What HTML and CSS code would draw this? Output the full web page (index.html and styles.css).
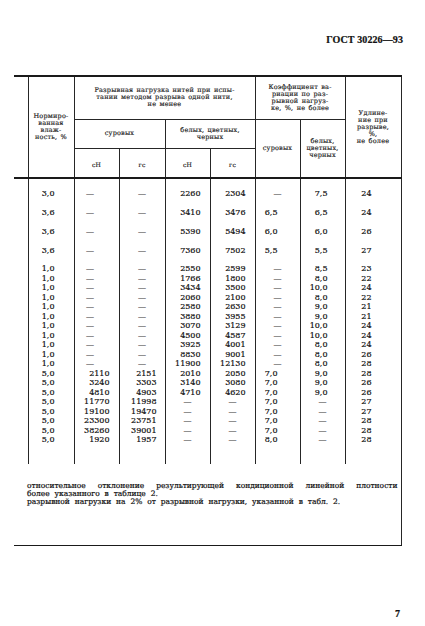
FILE: index.html
```html
<!DOCTYPE html>
<html lang="ru">
<head>
<meta charset="utf-8">
<title>ГОСТ 30226—93</title>
<link rel="stylesheet" href="styles.css">
</head>
<body>
<div class="page">
  <div class="gost">ГОСТ 30226—93</div>
  <table class="tbl">
    <colgroup>
      <col class="c0"><col class="c1"><col class="c2"><col class="c3"><col class="c4"><col class="c5"><col class="c6"><col class="c7"><col class="c8">
    </colgroup>
    <thead>
      <tr class="h1">
        <th class="edge" rowspan="3"></th>
        <th rowspan="3">Нормиро-<br>ванная<br>влаж-<br>ность, %</th>
        <th colspan="4">Разрывная нагрузка нитей при испы-<br>тании методом разрыва одной нити,<br>не менее</th>
        <th colspan="2">Коэффициент ва-<br>риации по раз-<br>рывной нагруз-<br>ке, %, не более</th>
        <th rowspan="3">Удлине-<br>ние при<br>разрыве,<br>%,<br>не более</th>
      </tr>
      <tr class="h2">
        <th colspan="2">суровых</th>
        <th colspan="2">белых, цветных,<br>черных</th>
        <th rowspan="2">суровых</th>
        <th rowspan="2">белых,<br>цветных,<br>черных</th>
      </tr>
      <tr class="h3">
        <th class="unit">сН</th>
        <th class="unit">гс</th>
        <th class="unit">сН</th>
        <th class="unit">гс</th>
      </tr>
    </thead>
    <tbody>
      <tr class="sp sp1"><td></td><td></td><td></td><td></td><td></td><td></td><td></td><td></td><td></td></tr>
      <tr class="big"><td></td><td>3,0</td><td class="d">—</td><td class="d">—</td><td>2260</td><td>2304</td><td class="d">—</td><td>7,5</td><td>24</td></tr>
      <tr class="big"><td></td><td>3,6</td><td class="d">—</td><td class="d">—</td><td>3410</td><td>3476</td><td>6,5</td><td>6,5</td><td>24</td></tr>
      <tr class="big"><td></td><td>3,6</td><td class="d">—</td><td class="d">—</td><td>5390</td><td>5494</td><td>6,0</td><td>6,0</td><td>26</td></tr>
      <tr class="big"><td></td><td>3,6</td><td class="d">—</td><td class="d">—</td><td>7360</td><td>7502</td><td>5,5</td><td>5,5</td><td>27</td></tr>
      <tr class="sp sp2"><td></td><td></td><td></td><td></td><td></td><td></td><td></td><td></td><td></td></tr>
      <tr class="sm"><td></td><td>1,0</td><td class="d">—</td><td class="d">—</td><td>2550</td><td>2599</td><td class="d">—</td><td>8,5</td><td>23</td></tr>
      <tr class="sm"><td></td><td>1,0</td><td class="d">—</td><td class="d">—</td><td>1766</td><td>1800</td><td class="d">—</td><td>8,0</td><td>22</td></tr>
      <tr class="sm"><td></td><td>1,0</td><td class="d">—</td><td class="d">—</td><td>3434</td><td>3500</td><td class="d">—</td><td>10,0</td><td>24</td></tr>
      <tr class="sm"><td></td><td>1,0</td><td class="d">—</td><td class="d">—</td><td>2060</td><td>2100</td><td class="d">—</td><td>8,0</td><td>22</td></tr>
      <tr class="sm"><td></td><td>1,0</td><td class="d">—</td><td class="d">—</td><td>2580</td><td>2630</td><td class="d">—</td><td>9,0</td><td>21</td></tr>
      <tr class="sm"><td></td><td>1,0</td><td class="d">—</td><td class="d">—</td><td>3880</td><td>3955</td><td class="d">—</td><td>9,0</td><td>21</td></tr>
      <tr class="sm"><td></td><td>1,0</td><td class="d">—</td><td class="d">—</td><td>3070</td><td>3129</td><td class="d">—</td><td>10,0</td><td>24</td></tr>
      <tr class="sm"><td></td><td>1,0</td><td class="d">—</td><td class="d">—</td><td>4500</td><td>4587</td><td class="d">—</td><td>10,0</td><td>24</td></tr>
      <tr class="sm"><td></td><td>1,0</td><td class="d">—</td><td class="d">—</td><td>3925</td><td>4001</td><td class="d">—</td><td>8,0</td><td>24</td></tr>
      <tr class="sm"><td></td><td>1,0</td><td class="d">—</td><td class="d">—</td><td>8830</td><td>9001</td><td class="d">—</td><td>8,0</td><td>26</td></tr>
      <tr class="sm"><td></td><td>1,0</td><td class="d">—</td><td class="d">—</td><td>11900</td><td>12130</td><td class="d">—</td><td>8,0</td><td>28</td></tr>
      <tr class="sm"><td></td><td>5,0</td><td>2110</td><td>2151</td><td>2010</td><td>2050</td><td>7,0</td><td>9,0</td><td>28</td></tr>
      <tr class="sm"><td></td><td>5,0</td><td>3240</td><td>3303</td><td>3140</td><td>3080</td><td>7,0</td><td>9,0</td><td>26</td></tr>
      <tr class="sm"><td></td><td>5,0</td><td>4810</td><td>4903</td><td>4710</td><td>4620</td><td>7,0</td><td>9,0</td><td>26</td></tr>
      <tr class="sm"><td></td><td>5,0</td><td>11770</td><td>11998</td><td class="d">—</td><td class="d">—</td><td>7,0</td><td class="d">—</td><td>27</td></tr>
      <tr class="sm"><td></td><td>5,0</td><td>19100</td><td>19470</td><td class="d">—</td><td class="d">—</td><td>7,0</td><td class="d">—</td><td>27</td></tr>
      <tr class="sm"><td></td><td>5,0</td><td>23300</td><td>23751</td><td class="d">—</td><td class="d">—</td><td>7,0</td><td class="d">—</td><td>28</td></tr>
      <tr class="sm"><td></td><td>5,0</td><td>38260</td><td>39001</td><td class="d">—</td><td class="d">—</td><td>7,0</td><td class="d">—</td><td>28</td></tr>
      <tr class="sm"><td></td><td>5,0</td><td>1920</td><td>1957</td><td class="d">—</td><td class="d">—</td><td>8,0</td><td class="d">—</td><td>28</td></tr>
      <tr class="sp sp3"><td></td><td></td><td></td><td></td><td></td><td></td><td></td><td></td><td></td></tr>
    </tbody>
    <tfoot>
      <tr>
        <td class="notes" colspan="9">
          <p class="note just">относительное отклонение результирующей кондиционной линейной плотности</p>
          <p class="note">более указанного в таблице 2.</p>
          <p class="note">разрывной нагрузки на 2% от разрывной нагрузки, указанной в табл. 2.</p>
        </td>
      </tr>
    </tfoot>
  </table>
  <div class="pageno">7</div>
</div>
</body>
</html>
```

FILE: styles.css
```css
html, body {
  margin: 0;
  padding: 0;
  background: #ffffff;
}

body {
  color: #1c1c1c;
  font-family: "DejaVu Serif", "Liberation Serif", serif;
}

.page {
  width: 425px;
  height: 626px;
  overflow: hidden;
}

.gost {
  padding: 35px 22px 0 0;
  height: 10px;
  text-align: right;
  font: bold 10px/10px "Liberation Serif", serif;
  letter-spacing: 0.1px;
  color: #111;
  -webkit-text-stroke: 0.2px #111;
}

.tbl {
  margin: 30px 0 0 14px;
  width: 387px;
  border-collapse: collapse;
  table-layout: fixed;
}

.c0 { width: 14px; }
.c1 { width: 46px; }
.c2 { width: 45px; }
.c3 { width: 46px; }
.c4 { width: 45px; }
.c5 { width: 45px; }
.c6 { width: 45px; }
.c7 { width: 45px; }
.c8 { width: 56px; }

.tbl th {
  padding: 0;
  border: 1px solid #262626;
  font-weight: normal;
  font-size: 6.5px;
  line-height: 7px;
  letter-spacing: 0.2px;
  word-spacing: 1px;
  text-align: center;
  vertical-align: middle;
  color: #161616;
  -webkit-text-stroke: 0.15px #161616;
}

.tbl th.edge {
  border-left: none;
}

.tbl tr.h1 th {
  border-top: 2px solid #1a1a1a;
}

.tbl tr.h1 { height: 43px; }
.tbl tr.h2 { height: 29px; }
.tbl tr.h3 { height: 30px; }

.tbl tr.h3 th,
.tbl tr.h1 th[rowspan],
.tbl tr.h2 th[rowspan] {
  border-bottom: 2px solid #1a1a1a;
}

.tbl th.unit {
  font-size: 6px;
  padding-top: 3px;
}

.tbl td {
  padding: 0;
  border-left: 1px solid #262626;
  border-right: 1px solid #262626;
  font-size: 8px;
  text-align: right;
  vertical-align: middle;
  white-space: nowrap;
  color: #111;
  -webkit-text-stroke: 0.2px #111;
}

.tbl tbody td:first-child {
  border-left: none;
}

.tbl tr.big { height: 19px; }
.tbl tr.big td { line-height: 19px; }
.tbl tr.sm { height: 9.5px; }
.tbl tr.sm td { line-height: 9.5px; }
.tbl tr.sp1 { height: 6px; }
.tbl tr.sp2 { height: 4px; }
.tbl tr.sp3 { height: 19px; }

.tbl td:nth-child(2) { padding-right: 19px; }
.tbl td:nth-child(3) { padding-right: 9px; }
.tbl td:nth-child(4) { padding-right: 8px; }
.tbl td:nth-child(5) { padding-right: 9px; }
.tbl td:nth-child(6) { padding-right: 9px; }
.tbl td:nth-child(7) { padding-right: 22px; }
.tbl td:nth-child(8) { padding-right: 17px; }
.tbl td:nth-child(9) { padding-right: 29px; }

.tbl td.d {
  text-align: center;
  padding-right: 0;
}

.tbl td.d:nth-child(3) {
  padding-right: 13px;
}

.tbl td.notes {
  border-left: none;
  border-right: 1px solid #262626;
  border-bottom: 1.5px solid #1a1a1a;
  height: 55px;
  padding: 18px 3px 8px 13px;
  vertical-align: top;
  text-align: left;
  white-space: normal;
  font-size: 7.5px;
  line-height: 8px;
  word-spacing: 2.5px;
}

.note {
  margin: 0;
  white-space: nowrap;
}

.note.just {
  text-align: justify;
  text-align-last: justify;
  white-space: normal;
  word-spacing: 0;
}

.pageno {
  padding: 63px 25px 0 0;
  text-align: right;
  font: bold 10px/10px "Liberation Serif", serif;
  color: #111;
  -webkit-text-stroke: 0.2px #111;
}
```
